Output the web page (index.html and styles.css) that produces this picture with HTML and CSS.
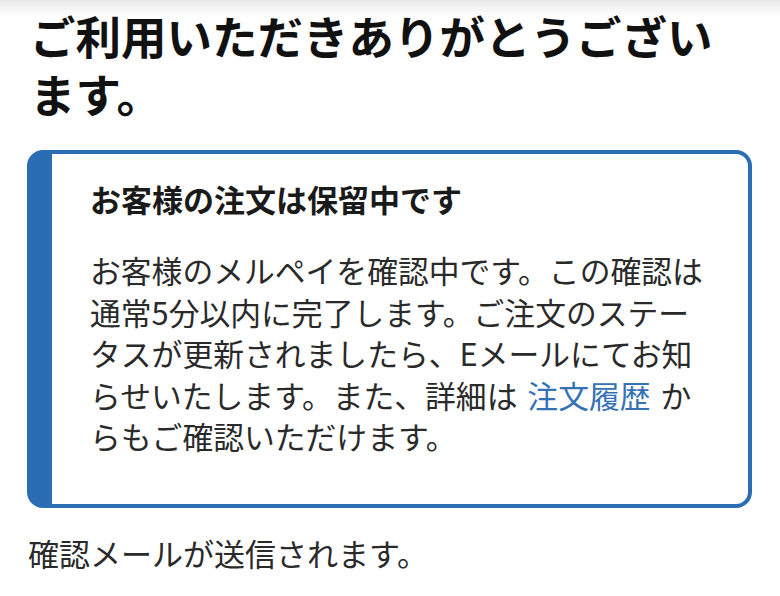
FILE: index.html
```html
<!DOCTYPE html>
<html lang="ja">
<head>
<meta charset="utf-8">
<link rel="stylesheet" href="styles.css">
</head>
<body>
<div class="topshade"></div>
<main class="page">
  <h1 class="thanks">ご利用いただきありがとうございます。</h1>
  <section class="notice">
    <h2 class="notice-title">お客様の注文は保留中です</h2>
    <p class="notice-body">お客様のメルペイを確認中です。この確認は通常5分以内に完了します。ご注文のステータスが更新されましたら、Eメールにてお知らせいたします。また、詳細は <a class="link" href="#">注文履歴</a> からもご確認いただけます。</p>
  </section>
  <p class="note">確認メールが送信されます。</p>
</main>
</body>
</html>
```

FILE: styles.css
```css
html, body {
  margin: 0;
  padding: 0;
  background: #ffffff;
}
body {
  font-family: "Noto Sans CJK JP", "Noto Sans", sans-serif;
  color: #222;
  position: relative;
  width: 780px;
  height: 596px;
  overflow: hidden;
}
.topshade {
  position: absolute;
  left: 0;
  top: 0;
  width: 100%;
  height: 16px;
  background: linear-gradient(to bottom, rgba(0,0,0,0.09), rgba(0,0,0,0));
}
.page {
  padding: 6px 28px 0 27px;
}
.thanks {
  margin: 0 0 28px 3px;
  font-size: 45.5px;
  line-height: 58px;
  font-weight: 700;
  color: #111;
}
.notice {
  border: 4px solid #2a6db4;
  border-left-width: 25px;
  border-radius: 16px;
  padding: 25px 30px 47px 38px;
}
.notice-title {
  margin: 0 0 30px 0;
  font-size: 31px;
  line-height: 40px;
  font-weight: 700;
  color: #1a1a1a;
}
.notice-body {
  margin: 0;
  font-size: 30.8px;
  line-height: 41.5px;
  color: #2a2a2a;
  width: 622px;
}
.link {
  color: #3472b5;
  text-decoration: none;
  margin: 0 3px;
}
.note {
  margin: 24px 0 0 1px;
  font-size: 31px;
  line-height: 41px;
  color: #2a2a2a;
}
```
